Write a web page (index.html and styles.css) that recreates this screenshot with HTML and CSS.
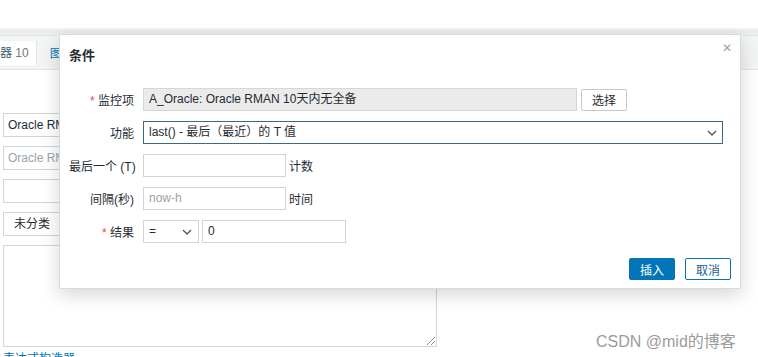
FILE: index.html
```html
<!DOCTYPE html>
<html lang="zh-CN">
<head>
  <meta charset="UTF-8" />
  <title>条件</title>
  <link rel="stylesheet" href="styles.css">
</head>
<body>
  <div class="page">
    <div class="band"></div>
    <div class="tabs">
      <span class="tab">器 <em>10</em></span>
      <span class="tab-link">图表</span>
    </div>
    <div class="form">
      <div class="field">Oracle RMAN 10天内无全备</div>
      <div class="field placeholder">Oracle RMAN 10天内无全备</div>
      <div class="field"></div>
      <div class="combo">未分类</div>
      <div class="area"><span class="grip"></span></div>
      <span class="builder">表达式构造器</span>
    </div>
  </div>

  <div class="dialog">
    <div class="dialog-head">
      <h4>条件</h4>
      <span class="close">&#x2715;</span>
    </div>
    <div class="dialog-body">
      <label class="req"><i>*</i> 监控项</label>
      <div class="line">
        <div class="input readonly wide">A_Oracle: Oracle RMAN 10天内无全备</div>
        <button class="btn-grey">选择</button>
      </div>

      <label>功能</label>
      <div class="line">
        <div class="input select full">
          <span>last() - 最后（最近）的 T 值</span>
          <svg width="10" height="6" viewBox="0 0 10 6"><path d="M1 1l4 4 4-4" fill="none" stroke="#4a555b" stroke-width="1.3"/></svg>
        </div>
      </div>

      <label>最后一个 (T)</label>
      <div class="line">
        <div class="input short"></div>
        <span class="unit">计数</span>
      </div>

      <label>间隔(秒)</label>
      <div class="line">
        <div class="input short hint">now-h</div>
        <span class="unit">时间</span>
      </div>

      <label class="req"><i>*</i> 结果</label>
      <div class="line">
        <div class="input op">
          <span>=</span>
          <svg width="10" height="6" viewBox="0 0 10 6"><path d="M1 1l4 4 4-4" fill="none" stroke="#4a555b" stroke-width="1.3"/></svg>
        </div>
        <div class="input value">0</div>
      </div>
    </div>
    <div class="dialog-foot">
      <button class="btn-main">插入</button>
      <button class="btn-alt">取消</button>
    </div>
  </div>

  <div class="csdn">CSDN @mid的博客</div>
</body>
</html>
```

FILE: styles.css
```css
body {
  margin: 0;
  font-family: "Liberation Sans", Arial, "Noto Sans CJK SC", sans-serif;
  font-size: 12px;
  color: #1f2c33;
  background: #fff;
  width: 758px;
  height: 357px;
  overflow: hidden;
  position: relative;
}
.page {
  padding-top: 28px;
}
.band {
  height: 7px;
  background: linear-gradient(to bottom, #f6f7f7, #e6eaea 50%, #eff1f1);
  border-bottom: 1px solid #e0e5e5;
}
.tabs {
  height: 33px;
  background: #f3f4f4;
  border-bottom: 1px solid #e0e4e6;
  display: flex;
  align-items: center;
  gap: 13px;
}
.tab {
  background: #fff;
  height: 24px;
  line-height: 24px;
  padding: 0 7px 0 0;
  color: #3d5a6c;
  border-right: 1px solid #e4e8ea;
}
.tab em {
  font-style: normal;
  color: #6f7b82;
}
.tab-link {
  color: #0275b8;
}
.form {
  padding: 43px 0 0 3px;
  display: flex;
  flex-direction: column;
  align-items: flex-start;
}
.field {
  width: 300px;
  height: 22px;
  line-height: 22px;
  border: 1px solid #cfd5d8;
  padding: 0 4px;
  margin-bottom: 9px;
  white-space: nowrap;
  overflow: hidden;
}
.field.placeholder {
  color: #9aa3a8;
}
.combo {
  height: 22px;
  line-height: 22px;
  width: 56px;
  border: 1px solid #cfd5d8;
  text-align: center;
  margin-bottom: 9px;
}
.area {
  width: 432px;
  height: 100px;
  border: 1px solid #cfd5d8;
  position: relative;
}
.grip {
  position: absolute;
  right: 1px;
  bottom: 1px;
  width: 8px;
  height: 8px;
  background: linear-gradient(135deg, transparent 45%, #8f979b 46%, #8f979b 54%, transparent 55%, transparent 70%, #8f979b 71%, #8f979b 79%, transparent 80%);
}
.builder {
  margin-top: 2px;
  color: #0275b8;
  border-bottom: 1px dotted #0275b8;
}

.dialog {
  position: absolute;
  left: 59px;
  top: 34px;
  width: 662px;
  height: 253px;
  background: #fff;
  border: 1px solid #d5dadc;
  box-shadow: 0 6px 18px rgba(0, 0, 0, 0.16);
  padding: 0 9px;
}
.dialog-head {
  padding-top: 12px;
  position: relative;
}
.dialog-head h4 {
  margin: 0;
  font-size: 13px;
  line-height: 18px;
  font-weight: bold;
  color: #1f2c33;
}
.close {
  position: absolute;
  right: -1px;
  top: 6px;
  color: #9aa5ab;
  font-size: 12px;
}
.dialog-body {
  margin-top: 23px;
  padding-right: 8px;
  display: grid;
  grid-template-columns: 65px 1fr;
  column-gap: 9px;
  row-gap: 10px;
  align-items: center;
}
.dialog-body label {
  text-align: right;
  white-space: nowrap;
}
.dialog-body label i {
  color: #d64e4e;
  font-style: normal;
}
.line {
  display: flex;
  align-items: center;
  gap: 4px;
  height: 23px;
}
.input {
  height: 21px;
  line-height: 21px;
  border: 1px solid #cfd5d8;
  padding: 0 5px;
  background: #fff;
  white-space: nowrap;
}
.input.readonly {
  background: #ebebeb;
  border-color: #d6d6d6;
}
.input.wide {
  width: 422px;
}
.input.full {
  width: 568px;
  border-color: #3e6b82;
}
.input.select,
.input.op {
  display: flex;
  justify-content: space-between;
  align-items: center;
}
.input.short {
  width: 131px;
}
.input.hint {
  color: #9aa3a8;
}
.input.op {
  width: 43px;
  padding-right: 6px;
}
.input.value {
  width: 132px;
  margin-left: -1px;
}
.unit {
  margin-left: -1px;
}
.btn-grey {
  width: 46px;
  height: 22px;
  font: inherit;
  color: #1f2c33;
  background: #fff;
  border: 1px solid #c5cacc;
  border-radius: 2px;
  padding: 0;
}
.dialog-foot {
  margin-top: 15px;
  display: flex;
  justify-content: flex-end;
  gap: 10px;
}
.btn-main,
.btn-alt {
  width: 46px;
  height: 22px;
  font: inherit;
  border-radius: 2px;
  padding: 0;
  border: 1px solid #0275b8;
}
.btn-main {
  background: #0275b8;
  color: #fff;
}
.btn-alt {
  background: #fff;
  color: #1b5e93;
}
.csdn {
  position: absolute;
  left: 596px;
  top: 328px;
  font-size: 16px;
  color: #9b9b9b;
}
```
